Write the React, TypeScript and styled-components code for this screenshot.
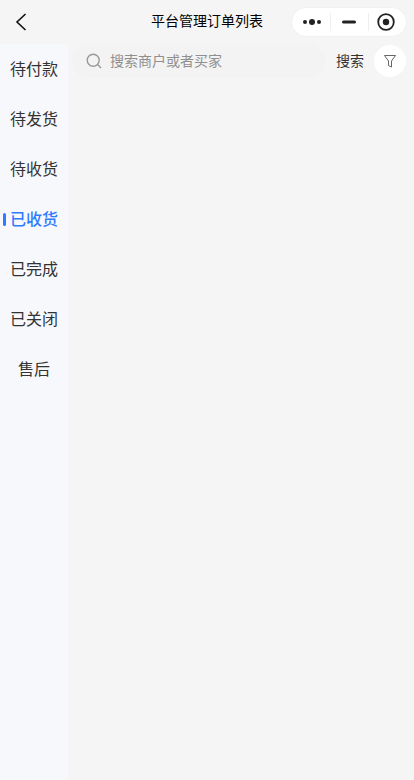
import * as React from "react";
import styled, { createGlobalStyle } from "styled-components";

const GlobalStyle = createGlobalStyle`
    html, body {
        margin: 0;
        padding: 0;
        background: #f5f5f5;
    }
    body {
        font-family: "Liberation Sans", "Noto Sans CJK SC", sans-serif;
    }
`;

const Page = styled.div`
    width: 414px;
    height: 780px;
    display: flex;
    flex-direction: column;
    overflow: hidden;
    background: #f5f5f5;
`;

const NavBar = styled.div`
    height: 44px;
    flex: none;
    display: grid;
    grid-template-columns: 1fr auto 1fr;
    align-items: center;
`;

const BackButton = styled.div`
    padding-left: 15px;
    display: flex;
    align-items: center;
`;

const NavTitle = styled.div`
    font-size: 14px;
    line-height: 20px;
    padding-bottom: 2px;
    color: #000;
`;

const CapsuleSlot = styled.div`
    display: flex;
    justify-content: flex-end;
    padding-right: 7px;
`;

const Capsule = styled.div`
    width: 116px;
    height: 30px;
    box-sizing: border-box;
    border: 1px solid #f1f1f1;
    border-radius: 15px;
    background: #fff;
    display: grid;
    grid-template-columns: 1fr 1fr 1fr;
    align-items: center;
    justify-items: center;
`;

const CapsuleCell = styled.div<{ divided?: boolean; shift?: number }>`
    width: 100%;
    height: 18px;
    box-sizing: border-box;
    display: flex;
    align-items: center;
    justify-content: center;
    border-left: ${props => (props.divided ? "1px solid #eeeeee" : "none")};
    padding-left: ${props => (props.shift && props.shift > 0 ? props.shift : 0)}px;
    padding-right: ${props => (props.shift && props.shift < 0 ? -props.shift : 0)}px;
`;

const Body = styled.div`
    flex: 1;
    display: flex;
    min-height: 0;
`;

const SideBar = styled.ul`
    width: 68px;
    flex: none;
    margin: 0;
    padding: 0;
    list-style: none;
    background: #f7f8fc;
`;

const SideItem = styled.li<{ active?: boolean }>`
    position: relative;
    height: 50px;
    box-sizing: border-box;
    padding-bottom: 2px;
    display: flex;
    align-items: center;
    justify-content: center;
    font-size: 16px;
    font-weight: ${props => (props.active ? 500 : 400)};
    color: ${props => (props.active ? "#2f7bff" : "#333333")};
`;

const ActiveMark = styled.span`
    position: absolute;
    left: 3px;
    top: 19px;
    width: 3px;
    height: 13px;
    border-radius: 2px;
    background: #2f7bff;
`;

const Content = styled.div`
    flex: 1;
    min-width: 0;
`;

const SearchRow = styled.div`
    height: 34px;
    display: flex;
    align-items: center;
    padding: 0 8px 0 4px;
`;

const SearchBox = styled.div`
    width: 253px;
    height: 34px;
    flex: none;
    box-sizing: border-box;
    padding-left: 14px;
    border-radius: 17px;
    background: #f3f3f3;
    display: flex;
    align-items: center;
    gap: 8px;
`;

const Placeholder = styled.span`
    font-size: 14px;
    line-height: 20px;
    color: #8f8f8f;
`;

const SearchLabel = styled.span`
    margin-left: 11px;
    font-size: 14px;
    line-height: 20px;
    color: #333333;
    white-space: nowrap;
`;

const FilterButton = styled.div`
    width: 32px;
    height: 32px;
    margin-left: auto;
    border-radius: 50%;
    background: #fff;
    display: flex;
    align-items: center;
    justify-content: center;
`;

const tabs = ["待付款", "待发货", "待收货", "已收货", "已完成", "已关闭", "售后"];

export default function App() {
    return (
        <Page>
            <GlobalStyle />
            <NavBar>
                <BackButton>
                    <svg width="12" height="20" viewBox="0 0 12 20" fill="none">
                        <path d="M10.5 2 2 10l8.5 8" stroke="#111" strokeWidth="1.6" />
                    </svg>
                </BackButton>
                <NavTitle>平台管理订单列表</NavTitle>
                <CapsuleSlot>
                    <Capsule>
                        <CapsuleCell shift={2}>
                            <svg width="20" height="8" viewBox="0 0 20 8">
                                <circle cx="3" cy="4" r="2" fill="#222" />
                                <circle cx="10" cy="4" r="3" fill="#222" />
                                <circle cx="17" cy="4" r="2" fill="#222" />
                            </svg>
                        </CapsuleCell>
                        <CapsuleCell divided shift={-1}>
                            <svg width="14" height="4" viewBox="0 0 14 4">
                                <rect y="0.5" width="14" height="3" rx="1.5" fill="#222" />
                            </svg>
                        </CapsuleCell>
                        <CapsuleCell divided shift={-4}>
                            <svg width="18" height="18" viewBox="0 0 18 18" fill="none">
                                <circle cx="9" cy="9" r="7.8" stroke="#222" strokeWidth="1.8" />
                                <circle cx="9" cy="9" r="3.2" fill="#222" />
                            </svg>
                        </CapsuleCell>
                    </Capsule>
                </CapsuleSlot>
            </NavBar>
            <Body>
                <SideBar>
                    {tabs.map((tab, i) => (
                        <SideItem key={tab} active={i === 3}>
                            {i === 3 && <ActiveMark />}
                            {tab}
                        </SideItem>
                    ))}
                </SideBar>
                <Content>
                    <SearchRow>
                        <SearchBox>
                            <svg width="16" height="16" viewBox="0 0 16 16" fill="none">
                                <circle cx="7.2" cy="7.2" r="6" stroke="#9a9a9a" strokeWidth="1.4" />
                                <path d="m11.6 11.6 3.4 3.4" stroke="#9a9a9a" strokeWidth="1.4" />
                            </svg>
                            <Placeholder>搜索商户或者买家</Placeholder>
                        </SearchBox>
                        <SearchLabel>搜索</SearchLabel>
                        <FilterButton>
                            <svg width="12" height="13" viewBox="0 0 12 13" fill="none">
                                <path d="M.5.5h11L7.5 6v6L4.5 10.5V6z" stroke="#666" strokeWidth="1" strokeLinejoin="round" />
                            </svg>
                        </FilterButton>
                    </SearchRow>
                </Content>
            </Body>
        </Page>
    );
}
